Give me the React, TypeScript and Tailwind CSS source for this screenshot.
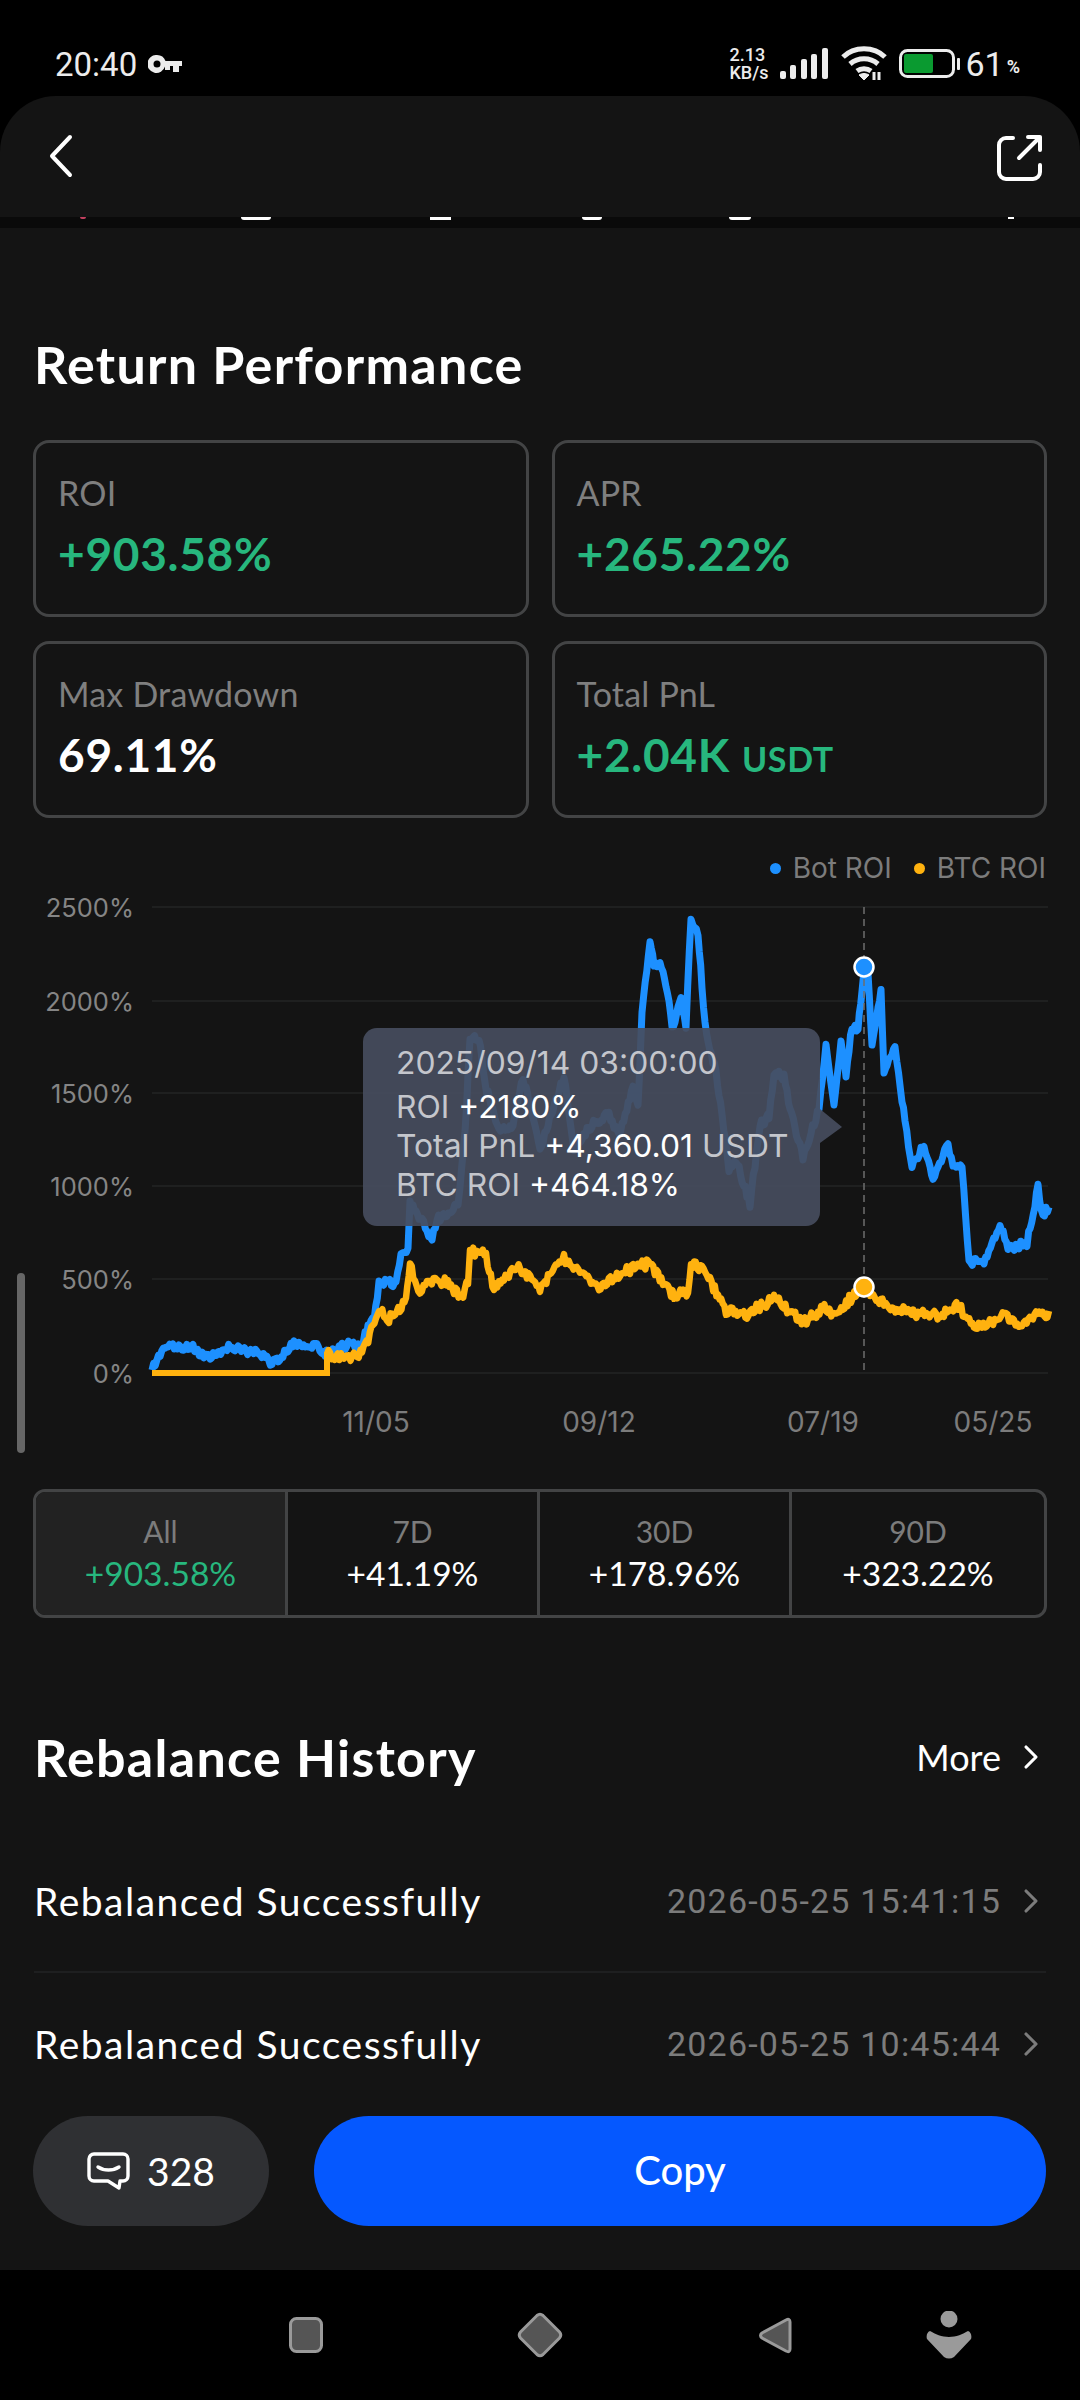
import { ChevronRight } from "lucide-react";

type Point = [number, number];

const bluePoints: Point[] = [
  [152, 1370], [165, 1346], [193, 1348], [207, 1358], [227, 1348], [265, 1354], [272, 1364], [294, 1344], [315, 1346], [325, 1354],
  [350, 1344], [360, 1348], [365, 1334], [374, 1318], [379, 1283], [396, 1283], [401, 1255], [408, 1251], [410, 1204], [422, 1220],
  [432, 1239], [437, 1220], [458, 1204], [465, 1133], [470, 1038], [479, 1038], [485, 1085], [499, 1129], [513, 1125], [523, 1077],
  [540, 1148], [564, 1077], [574, 1148], [592, 1125], [609, 1113], [619, 1137], [633, 1089], [638, 1109], [642, 1014], [650, 939],
  [654, 966], [660, 962], [669, 998], [672, 1030], [681, 998], [686, 1026], [691, 917], [698, 935], [702, 986], [705, 1026],
  [716, 1073], [722, 1113], [729, 1172], [736, 1160], [750, 1204], [760, 1125], [769, 1117], [774, 1073], [784, 1077], [790, 1109],
  [803, 1156], [819, 1109], [826, 1042], [834, 1105], [841, 1042], [846, 1073], [852, 1026], [858, 1030], [862, 990], [864, 967],
  [868, 975], [872, 1048], [881, 990], [884, 1073], [895, 1046], [902, 1101], [905, 1121], [912, 1166], [924, 1144], [933, 1180],
  [948, 1144], [953, 1164], [962, 1164], [969, 1261], [984, 1263], [1000, 1223], [1008, 1249], [1027, 1243], [1038, 1188], [1043, 1216],
  [1049, 1206],
];

const btcPoints: Point[] = [
  [327, 1354], [344, 1358], [362, 1354], [379, 1312], [389, 1318], [406, 1303], [410, 1265], [420, 1295], [427, 1283], [448, 1281],
  [460, 1299], [468, 1283], [470, 1251], [486, 1255], [494, 1289], [517, 1265], [540, 1287], [564, 1259], [599, 1287], [630, 1269],
  [650, 1263], [671, 1295], [688, 1291], [691, 1265], [702, 1267], [726, 1310], [747, 1314], [774, 1299], [805, 1322], [826, 1307],
  [833, 1314], [864, 1287], [884, 1303], [905, 1312], [936, 1316], [958, 1305], [974, 1330], [1001, 1316], [1022, 1324], [1036, 1312],
  [1049, 1314],
];

// jagged line through the key points, seeded so the render stays the same
function jagged(points: Point[], amp: number, seed: number) {
  let s = seed;
  const rand = () => {
    s = (s * 16807) % 2147483647;
    return s / 2147483647 - 0.5;
  };
  let d = `M${points[0][0]} ${points[0][1]}`;
  for (let i = 1; i < points.length; i++) {
    const [x0, y0] = points[i - 1];
    const [x1, y1] = points[i];
    const steps = Math.max(1, Math.round((x1 - x0) / 1.6));
    for (let k = 1; k <= steps; k++) {
      const t = k / steps;
      d += `L${(x0 + (x1 - x0) * t).toFixed(1)} ${(y0 + (y1 - y0) * t + rand() * amp).toFixed(1)}`;
    }
  }
  return d;
}

const grid = [
  { label: "2500%", y: 907 },
  { label: "2000%", y: 1001 },
  { label: "1500%", y: 1093 },
  { label: "1000%", y: 1186 },
  { label: "500%", y: 1279 },
  { label: "0%", y: 1373 },
];

const xLabels = [
  { label: "11/05", x: 376 },
  { label: "09/12", x: 599 },
  { label: "07/19", x: 823 },
  { label: "05/25", x: 993 },
];

const periods = [
  { name: "All", value: "+903.58%", active: true },
  { name: "7D", value: "+41.19%", active: false },
  { name: "30D", value: "+178.96%", active: false },
  { name: "90D", value: "+323.22%", active: false },
];

function StatusBar() {
  return (
    <div className="flex h-[96px] items-center justify-between pl-[55px] pr-[60px] pt-[32px] font-[Roboto,sans-serif] text-[#ececec]">
      <div className="flex items-center gap-[11px]">
        <span className="text-[33px] leading-none">20:40</span>
        <svg width="35" height="18" viewBox="0 0 35 18" fill="#ececec">
          <path fillRule="evenodd" d="M9 0a9 9 0 0 1 8.500 6H34v5h-3v6h-6v-6h-3v4h-5v-3.400A9 9 0 1 1 9 0Zm0 5.500a3.500 3.500 0 1 0 0 7 3.500 3.500 0 0 0 0-7Z" />
        </svg>
      </div>
      <div className="flex items-center">
        <div className="flex w-[43px] flex-col text-[18px] font-medium leading-[18px]">
          <span>2.13</span>
          <span>KB/s</span>
        </div>
        <svg className="ml-[8px]" width="48" height="32" viewBox="0 0 48 32" fill="#ececec">
          <rect x="0" y="23" width="6" height="8" rx="2" />
          <rect x="10" y="17" width="6" height="14" rx="2" />
          <rect x="21" y="11" width="6" height="20" rx="2" />
          <rect x="31" y="6" width="6" height="25" rx="2" />
          <rect x="42" y="0" width="6" height="31" rx="2" />
        </svg>
        <svg className="ml-[13px]" width="47" height="36" viewBox="0 0 47 36" fill="none" stroke="#ececec" strokeWidth="5">
          <path d="M2 11C13 0 33 0 44 11" />
          <path d="M9 18c8-7 20-7 28 0" />
          <path d="M16 25c4-3 10-3 14 0" />
          <path d="M23 34l-5-5c3-2 7-2 10 0Z" fill="#ececec" strokeWidth="1" />
          <path d="M33 26v8M38 26v8" strokeWidth="3" />
        </svg>
        <svg className="ml-[11px]" width="62" height="30" viewBox="0 0 62 30" fill="none">
          <rect x="1.500" y="1.500" width="53" height="26" rx="7" stroke="#ececec" strokeWidth="3" />
          <rect x="5" y="5" width="29" height="19" rx="2" fill="#0a9a30" />
          <rect x="58" y="9" width="3" height="12" rx="1" fill="#ececec" />
        </svg>
        <span className="ml-[4px] text-[34px] leading-none">61</span>
        <span className="ml-[3px] mt-[6px] text-[18px] font-bold leading-none">%</span>
      </div>
    </div>
  );
}

function StatCard({ label, value, unit, green = true }: { label: string; value: string; unit?: string; green?: boolean }) {
  return (
    <div className="flex h-[177px] flex-col rounded-[16px] border-[3px] border-[#434445] pl-[22px] pt-[30px]">
      <p className="text-[34px] leading-[40px] tracking-[0.2px] text-[#7f7f7f]">{label}</p>
      <p className={green ? "mt-[16px] text-[46px] font-bold leading-[50px] tracking-[0.7px] text-[#27b77e]" : "mt-[16px] text-[46px] font-bold leading-[50px] tracking-[0.7px] text-white"}>
        {value}
        {unit && <span className="ml-[12px] text-[34px]">{unit}</span>}
      </p>
    </div>
  );
}

function Chart() {
  return (
    <div className="relative h-[566px] w-full">
      <svg className="block h-full w-full" viewBox="0 888 1080 566" fill="none">
        {grid.map((g) => (
          <g key={g.label}>
            <line x1="152" x2="1048" y1={g.y} y2={g.y} stroke="#232425" strokeWidth="1.500" />
            <text x="134" y={g.y + 10} textAnchor="end" fill="#858585" fontFamily="Inter, sans-serif" fontSize="25.500">
              {g.label}
            </text>
          </g>
        ))}
        {xLabels.map((l) => (
          <text key={l.label} x={l.x} y="1432" textAnchor="middle" fill="#7c7c7c" fontFamily="Inter, sans-serif" fontSize="28">
            {l.label}
          </text>
        ))}
        <path d={jagged(bluePoints, 8, 4217)} stroke="#1d90ff" strokeWidth="7" strokeLinejoin="round" />
        <path d={jagged(btcPoints, 10, 9931)} stroke="#ffb20f" strokeWidth="6.500" strokeLinejoin="round" />
        <path d="M152 1373H327V1352" stroke="#ffb20f" strokeWidth="6" />
        <line x1="864" x2="864" y1="907" y2="1373" stroke="#6e6e6e" strokeWidth="1.500" strokeDasharray="7 5" />
        <circle cx="864" cy="967" r="9.500" fill="#1d90ff" stroke="#ffffff" strokeWidth="2.500" />
        <circle cx="864" cy="1287" r="9.500" fill="#ffb20f" stroke="#ffffff" strokeWidth="2.500" />
      </svg>

      {/* page scroll thumb */}
      <div className="absolute left-[17px] top-[385px] h-[180px] w-[8px] rounded-full bg-[#666666]" />

      {/* tooltip */}
      <div className="absolute left-[363px] top-[140px] h-[198px] w-[457px] rounded-[14px] bg-[#474d5e]/92 pl-[33px] pt-[15px] font-[Inter,sans-serif] text-[31.800px] leading-[39px] text-[#c4c6cc]">
        <p className="mb-[5px]">2025/09/14 03:00:00</p>
        <p>
          ROI <span className="text-white">+2180%</span>
        </p>
        <p>
          Total PnL <span className="text-white">+4,360.01</span> USDT
        </p>
        <p>
          BTC ROI <span className="text-white">+464.18%</span>
        </p>
        <svg className="absolute left-full top-[81px]" width="22" height="34" viewBox="0 0 22 34">
          <path d="M0 0L22 18L0 34Z" fill="#474d5e" fillOpacity="0.92" />
        </svg>
      </div>
    </div>
  );
}

function HistoryRow({ time, first }: { time: string; first?: boolean }) {
  return (
    <div className={first ? "flex h-[140px] items-center justify-between" : "flex h-[144px] items-center justify-between border-t-2 border-[#1e1f20]"}>
      <span className="text-[39px] tracking-[1.500px] text-white">Rebalanced Successfully</span>
      <span className="flex items-center font-[Roboto,sans-serif] text-[34px] tracking-[1.200px] text-[#7c7c7c]">
        {time}
        <ChevronRight className="ml-[10px] mr-[-5px]" size={40} strokeWidth={1.9} color="#7c7c7c" />
      </span>
    </div>
  );
}

function NavBar() {
  return (
    <div className="flex h-[130px] items-center pl-[289px] pr-[108px]">
      <svg width="34" height="36" viewBox="0 0 34 36">
        <rect x="1.500" y="1.500" width="31" height="33" rx="6" fill="#555555" stroke="#9a9a9a" strokeWidth="3" />
      </svg>
      <svg className="ml-[194px]" width="46" height="46" viewBox="0 0 46 46">
        <path d="M20 3.500Q23 1 26 3.500L42.500 20Q45 23 42.500 26L26 42.500Q23 45 20 42.500L3.500 26Q1 23 3.500 20Z" fill="#555555" stroke="#9a9a9a" strokeWidth="3" />
      </svg>
      <svg className="ml-[196px]" width="33" height="37" viewBox="0 0 33 37">
        <path d="M31 5Q31 1 27 3L3 16Q0 18.500 3 21L27 34Q31 36 31 32Z" fill="#555555" stroke="#9a9a9a" strokeWidth="3" strokeLinejoin="round" />
      </svg>
      <svg className="ml-auto" width="46" height="48" viewBox="0 0 46 48" fill="#9a9a9a">
        <circle cx="23" cy="8" r="8.500" />
        <path d="M4 20C9 23 16 26 23 26S37 23 42 20C45 21 46 25 45 28L28 46Q23 49 18 46L1 28C0 25 1 21 4 20Z" />
      </svg>
    </div>
  );
}

export default function App() {
  return (
    <div className="h-[2400px] w-[1080px] overflow-hidden bg-black font-[Lato,sans-serif]">
      <StatusBar />

      <div className="flex h-[2174px] flex-col overflow-hidden rounded-t-[56px] bg-[#141414]">
        <header className="flex h-[121px] flex-none items-start justify-between pl-[48px] pr-[36px] pt-[38px]">
          <svg width="28" height="44" viewBox="0 0 28 44" fill="none" stroke="#ffffff" strokeWidth="4" strokeLinecap="round" strokeLinejoin="round">
            <path d="M22 3L4 22L22 41" />
          </svg>
          <svg width="48" height="48" viewBox="0 0 48 48" fill="none" stroke="#ffffff" strokeWidth="4" strokeLinecap="round" strokeLinejoin="round">
            <path d="M17 4H10a7 7 0 0 0-7 7V38a7 7 0 0 0 7 7H37a7 7 0 0 0 7-7V31" />
            <path d="M23 24L44 3M32 3H44V16" />
          </svg>
        </header>

        {/* rest of the scrolled-away row peeks under the header */}
        <div className="relative h-[11px] flex-none bg-[#0a0a0a]">
          <div className="absolute left-[80px] top-0 h-[2px] w-[6px] rounded-b-full bg-[#c2405f]" />
          <div className="absolute left-[241px] top-0 h-[3px] w-[30px] rounded-b-full bg-white" />
          <div className="absolute left-[430px] top-0 h-[3px] w-[21px] bg-white" />
          <div className="absolute left-[582px] top-0 h-[3px] w-[20px] rounded-b-full bg-white" />
          <div className="absolute left-[729px] top-0 h-[3px] w-[22px] rounded-b-full bg-white" />
          <div className="absolute left-[1008px] top-0 h-[2px] w-[6px] bg-white" />
        </div>

        <main className="min-h-0 flex-1 overflow-hidden">
          <h2 className="mx-[34px] mt-[106px] text-[52px] font-bold leading-[60px] tracking-[1.300px] text-white">Return Performance</h2>

          <div className="mx-[33px] mt-[46px] grid grid-cols-2 gap-x-[23px] gap-y-[24px]">
            <StatCard label="ROI" value="+903.58%" />
            <StatCard label="APR" value="+265.22%" />
            <StatCard label="Max Drawdown" value="69.11%" green={false} />
            <StatCard label="Total PnL" value="+2.04K" unit="USDT" />
          </div>

          <div className="mx-[34px] mt-[30px] flex h-[40px] items-center justify-end font-[Inter,sans-serif] text-[28px] text-[#7c7c7c]">
            <span className="h-[11px] w-[11px] rounded-full bg-[#1d90ff]" />
            <span className="ml-[12px]">Bot ROI</span>
            <span className="ml-[22px] h-[11px] w-[11px] rounded-full bg-[#ffb20f]" />
            <span className="ml-[12px]">BTC ROI</span>
          </div>

          <Chart />

          <div className="mx-[33px] mt-[35px] grid h-[129px] grid-cols-4 overflow-hidden rounded-[12px] border-[3px] border-[#434445]">
            {periods.map((p, i) => (
              <div
                key={p.name}
                className={
                  (p.active ? "bg-[#222222] " : "") +
                  (i < 3 ? "border-r-[3px] border-[#434445] " : "") +
                  "flex flex-col items-center justify-center pb-[3px]"
                }
              >
                <span className="text-[30px] leading-[41px] text-[#7c7c7c]">{p.name}</span>
                <span className={p.active ? "text-[33.500px] leading-[42px] text-[#27b77e]" : "text-[33.500px] leading-[42px] text-white"}>{p.value}</span>
              </div>
            ))}
          </div>

          <div className="mx-[34px] mt-[109px] flex h-[60px] items-center justify-between">
            <h2 className="text-[52px] font-bold leading-[60px] tracking-[1.300px] text-white">Rebalance History</h2>
            <span className="flex items-center text-[36px] text-white">
              More
              <ChevronRight className="ml-[10px] mr-[-5px]" size={40} strokeWidth={1.9} color="#ffffff" />
            </span>
          </div>

          <div className="mx-[34px] mt-[44px]">
            <HistoryRow first time="2026-05-25 15:41:15" />
            <HistoryRow time="2026-05-25 10:45:44" />
          </div>
        </main>

        <div className="flex h-[180px] flex-none gap-[45px] bg-[#141414] pl-[33px] pr-[34px] pt-[26px]">
          <button type="button" className="flex h-[110px] w-[236px] items-center justify-center gap-[17px] rounded-full bg-[#2f3033] text-[39px] text-white">
            <svg width="43" height="38" viewBox="0 0 43 38" fill="none" stroke="#ffffff" strokeWidth="3.400" strokeLinecap="round" strokeLinejoin="round">
              <path d="M7 2H36a5 5 0 0 1 5 5V24a5 5 0 0 1-5 5H33L32 36L21 29H7a5 5 0 0 1-5-5V7a5 5 0 0 1 5-5Z" />
              <path d="M11 15c6 4 15 4 21 0" />
            </svg>
            328
          </button>
          <button type="button" className="flex h-[110px] flex-1 items-center justify-center rounded-full bg-[#0558ff] pb-[2px] text-[40px] font-medium text-white">
            Copy
          </button>
        </div>
      </div>

      <NavBar />
    </div>
  );
}
